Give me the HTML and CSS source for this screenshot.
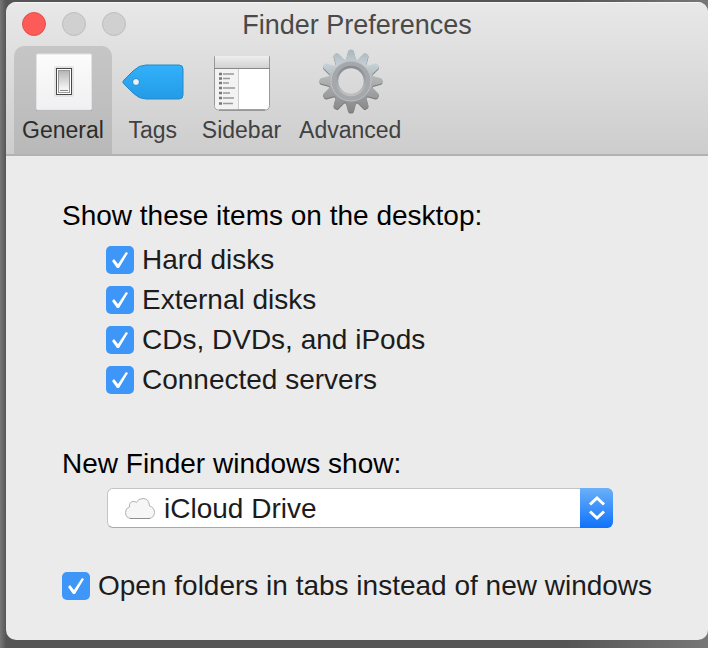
FILE: index.html
```html
<!DOCTYPE html>
<html lang="en">
<head>
  <meta charset="UTF-8">
  <meta name="viewport" content="width=device-width, initial-scale=1.0">
  <title>Finder Preferences</title>
  <link rel="stylesheet" href="styles.css">
</head>
<body>
  <div class="window">
    <header class="header">
      <div class="titlebar">
        <div class="lights">
          <button type="button" class="light close" aria-label="Close"></button>
          <button type="button" class="light" aria-label="Minimize" disabled></button>
          <button type="button" class="light" aria-label="Zoom" disabled></button>
        </div>
        <h1>Finder Preferences</h1>
      </div>
      <nav class="toolbar">
        <button type="button" class="tab active">
          <svg width="60" height="60" viewBox="0 0 60 60">
            <defs>
              <linearGradient id="plate" x1="0" y1="0" x2="0" y2="1">
                <stop offset="0" stop-color="#fcfcfc"/>
                <stop offset="1" stop-color="#f0f0f2"/>
              </linearGradient>
              <linearGradient id="rocker" x1="0" y1="0" x2="0" y2="1">
                <stop offset="0" stop-color="#b4b4b4"/>
                <stop offset="0.75" stop-color="#eee"/>
                <stop offset="1" stop-color="#fff"/>
              </linearGradient>
            </defs>
            <rect x="3" y="3" width="56" height="56" rx="1" fill="#999"/>
            <rect x="3.500" y="2" width="55" height="56" rx="1" fill="url(#plate)" stroke="#e2e2e2"/>
            <rect x="21" y="14" width="20" height="31" rx="2" fill="#e4e4e4"/>
            <rect x="23.500" y="16.500" width="15" height="26" fill="#fff" stroke="#484848"/>
            <rect x="25.500" y="18.500" width="11" height="22" fill="url(#rocker)" stroke="#999"/>
            <path d="M27 38.500h8" stroke="#888"/>
          </svg>
          <span>General</span>
        </button>
        <button type="button" class="tab">
          <svg width="62" height="60" viewBox="0 0 62 60">
            <defs>
              <linearGradient id="tag" x1="0" y1="0" x2="0" y2="1">
                <stop offset="0" stop-color="#33b1fa"/>
                <stop offset="1" stop-color="#239be6"/>
              </linearGradient>
            </defs>
            <path d="M1.500 28.500 11 19Q17 13 24 13H57Q61 13 61 17V43Q61 47 57 47H24Q17 47 11 41L1.500 31.500Q0 30 1.500 28.500Z" fill="url(#tag)" stroke="#2489c8"/>
            <circle cx="14" cy="30" r="3.500" fill="#e8f4fb" stroke="#2387c4"/>
          </svg>
          <span>Tags</span>
        </button>
        <button type="button" class="tab">
          <svg width="60" height="60" viewBox="0 0 60 60">
            <defs>
              <linearGradient id="pane" x1="0" y1="0" x2="0" y2="1">
                <stop offset="0" stop-color="#eee"/>
                <stop offset="1" stop-color="#d2d2d2"/>
              </linearGradient>
            </defs>
            <path d="M3.500 4.500h55v49q0 4.500-5 4.500h-45q-5 0-5-4.500z" fill="#fff" stroke="#999"/>
            <path d="M4 4h54v12H4z" fill="url(#pane)"/>
            <path d="M4 16h23v41.500H9q-5 0-5-4.500z" fill="#f3f3f3"/>
            <path d="M3 16.500h56" stroke="#888"/>
            <path d="M27.500 17v41" stroke="#ccc"/>
            <path d="M8 58h46" stroke="#777"/>
            <path d="M8 22h3M8 26.500h3M8 31h3M8 36h3M8 41h3M8 46h3M8 51.500h3" stroke="#777" stroke-width="2.500"/>
            <path d="M12 22h11M12 26.500h7M12 31h6M12 36h12M12 41h7M12 46h11M12 51.500h10" stroke="#999" stroke-width="1.500"/>
          </svg>
          <span>Sidebar</span>
        </button>
        <button type="button" class="tab">
          <svg width="66" height="60" viewBox="-34 -29 66 60" overflow="visible">
            <defs>
              <linearGradient id="gear" gradientUnits="userSpaceOnUse" x1="0" y1="-32" x2="0" y2="32">
                <stop offset="0" stop-color="#a9b4ba"/>
                <stop offset="0.25" stop-color="#c3d0d5"/>
                <stop offset="0.5" stop-color="#aeb0b2"/>
                <stop offset="1" stop-color="#858585"/>
              </linearGradient>
              <linearGradient id="bevel" x1="0" y1="0" x2="0" y2="1">
                <stop offset="0" stop-color="#838b93"/>
                <stop offset="1" stop-color="#c0c0c0"/>
              </linearGradient>
              <path id="tooth" d="M-5.500-20-2.800-30Q-2.500-31.500 0-31.500T2.800-30L5.500-20Z"/>
              <mask id="hole">
                <rect x="-34" y="-34" width="68" height="68" fill="#fff"/>
                <circle r="13" fill="#000"/>
              </mask>
              <g id="cog">
                <circle r="22.500"/>
                <use href="#tooth"/>
                <use href="#tooth" transform="rotate(30)"/>
                <use href="#tooth" transform="rotate(60)"/>
                <use href="#tooth" transform="rotate(90)"/>
                <use href="#tooth" transform="rotate(120)"/>
                <use href="#tooth" transform="rotate(150)"/>
                <use href="#tooth" transform="rotate(180)"/>
                <use href="#tooth" transform="rotate(210)"/>
                <use href="#tooth" transform="rotate(240)"/>
                <use href="#tooth" transform="rotate(270)"/>
                <use href="#tooth" transform="rotate(300)"/>
                <use href="#tooth" transform="rotate(330)"/>
              </g>
              <mask id="cogShape">
                <use href="#cog" fill="#fff"/>
              </mask>
            </defs>
            <g mask="url(#hole)">
              <use href="#cog" y="1" fill="#747474"/>
              <rect x="-33" y="-33" width="66" height="66" fill="url(#gear)" mask="url(#cogShape)"/>
              <circle r="17" fill="none" stroke="#a6a7aa" stroke-width="5"/>
              <circle r="20" fill="none" stroke="#bfc1c3"/>
            </g>
            <circle r="14" fill="none" stroke="url(#bevel)" stroke-width="2.500"/>
          </svg>
          <span>Advanced</span>
        </button>
      </nav>
    </header>

    <form class="content">
      <h2 id="desktopItems">Show these items on the desktop:</h2>
      <div class="options" role="group" aria-labelledby="desktopItems">
        <label class="check"><input type="checkbox" name="hardDisks" checked>Hard disks</label>
        <label class="check"><input type="checkbox" name="externalDisks" checked>External disks</label>
        <label class="check"><input type="checkbox" name="discs" checked>CDs, DVDs, and iPods</label>
        <label class="check"><input type="checkbox" name="servers" checked>Connected servers</label>
      </div>

      <label class="heading" for="newWindow">New Finder windows show:</label>
      <div class="popup">
        <select id="newWindow" name="newWindow">
          <option>iCloud Drive</option>
          <option>Desktop</option>
          <option>Documents</option>
        </select>
        <svg class="cloud" width="32" height="24" viewBox="0 0 32 24">
          <path d="M7 21.500Q1.500 21 1.500 15.500 1.500 11 5.500 10 5 5 9 4.500 11 4 12.500 5.500 14 1.500 19 1.500 25 1.500 25.500 9 30.500 10.500 30.500 15.500 30 21 25 21.500Z" fill="#f6f6f6" stroke="#b2b2b2"/>
          <path d="M6 21.500h20" stroke="#8e8e8e"/>
        </svg>
        <span class="arrows">
          <svg width="18" height="28" viewBox="0 0 18 28" fill="none" stroke="#fff" stroke-width="3">
            <path d="M2 10.500 9 4l7 6.500M2 17.500 9 24l7-6.500"/>
          </svg>
        </span>
      </div>

      <label class="check"><input type="checkbox" name="tabs" checked>Open folders in tabs instead of new windows</label>
    </form>
  </div>
</body>
</html>
```
FILE: styles.css
```css
* {
  box-sizing: border-box;
}
body {
  margin: 0;
  padding: 2px 0 8px 6px;
  background: linear-gradient(90deg, #777, #555 6px, #555 80%, #777);
  font-family: "Liberation Sans", Arial, sans-serif;
  color: #1c1c1c;
}
button {
  font: inherit;
  color: inherit;
  border: none;
}
.window {
  background: #ebebeb;
  border-radius: 10px;
  overflow: hidden;
}
.header {
  background: linear-gradient(#e8e8e8, #cdcdcd);
  border-top: 1px solid #f6f6f6;
  border-bottom: 2px solid #b2b2b2;
}
.titlebar {
  position: relative;
  height: 43px;
}
h1 {
  margin: 0;
  font-size: 27px;
  font-weight: normal;
  line-height: 44px;
  text-align: center;
  color: #4a4a4a;
}
.lights {
  position: absolute;
  top: 9px;
  left: 16px;
  display: flex;
  gap: 16px;
}
.light {
  width: 24px;
  height: 24px;
  padding: 0;
  border: 1px solid #bdbdbd;
  border-radius: 50%;
  background: #d0d0d0;
}
.light.close {
  background: #fc5b57;
  border-color: #e2504c;
}
.toolbar {
  display: flex;
  gap: 2px;
  padding-left: 8px;
}
.tab {
  display: flex;
  flex-direction: column;
  align-items: center;
  height: 108px;
  padding: 6px 8px 0;
  background: none;
  border-radius: 10px 10px 0 0;
  font-size: 23px;
  line-height: 36px;
  color: #414141;
}
.tab.active {
  background: linear-gradient(#c6c6c6, #b9b9b9);
  color: #2c2c2c;
}
.content {
  padding: 40px 56px 34px;
  font-size: 28px;
  line-height: 40px;
}
h2,
.heading {
  display: block;
  margin: 0 0 4px;
  font-size: 28px;
  font-weight: normal;
  color: #000;
}
.options {
  margin: 0 0 44px 44px;
}
.check {
  display: flex;
  align-items: center;
  gap: 8px;
  white-space: nowrap;
}
input[type="checkbox"] {
  appearance: none;
  flex: none;
  width: 28px;
  height: 28px;
  margin: 0;
  border-radius: 5px;
  background: #3d96f8;
}
input[type="checkbox"]:checked::before {
  content: "";
  display: block;
  width: 28px;
  height: 28px;
  background: #fff;
  clip-path: polygon(6px 15px, 8px 13px, 12px 18px, 20px 6px, 22px 7px, 13px 22px, 11px 22px);
}
.popup {
  position: relative;
  margin: 0 39px 38px 45px;
}
select {
  appearance: none;
  display: block;
  width: 100%;
  height: 40px;
  padding: 0 40px 0 56px;
  border: 1px solid #c4c4c4;
  border-bottom-color: #a8a8a8;
  border-radius: 6px;
  background: #fff;
  font: inherit;
  color: #1c1c1c;
}
.cloud {
  position: absolute;
  top: 9px;
  left: 17px;
  pointer-events: none;
}
.arrows {
  position: absolute;
  top: 0;
  right: 0;
  display: flex;
  align-items: center;
  justify-content: center;
  width: 33px;
  height: 40px;
  border-radius: 0 6px 6px 0;
  background: linear-gradient(#6bb1f9, #0f71fb);
  pointer-events: none;
}
```
